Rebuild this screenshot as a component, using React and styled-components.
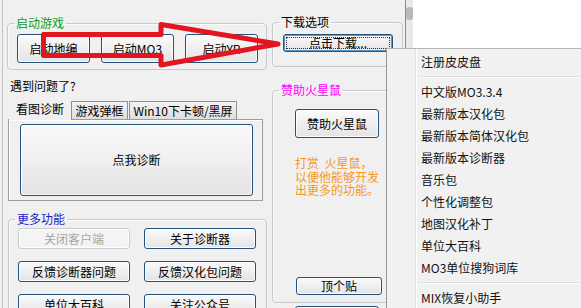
import React from "react";
import styled, { createGlobalStyle } from "styled-components";

const Global = createGlobalStyle`
  html, body { margin: 0; padding: 0; background: #f0f0f0; overflow: hidden; }
  #root { width: 581px; height: 308px; }
`;

const FONT = `"Noto Sans CJK SC", "Noto Sans", sans-serif`;

const Screen = styled.div`
  position: relative;
  width: 581px;
  height: 308px;
  overflow: hidden;
  display: flex;
  align-items: flex-start;
  background: #f0f0f0;
  font-family: ${FONT};
  font-size: 12px;
  color: #000;
`;

const WinEdge = styled.div`
  width: 1px;
  align-self: stretch;
  margin-left: 2px;
  background: #c4c4c4;
  flex: none;
`;

const LeftCol = styled.div`
  width: 260px;
  margin-left: 4px;
  padding-top: 16px;
  display: flex;
  flex-direction: column;
  flex: none;
`;

const RightCol = styled.div`
  width: 131px;
  margin-left: 5px;
  padding-top: 15px;
  display: flex;
  flex-direction: column;
  flex: none;
`;

const FarRight = styled.div`
  flex: 1;
  display: flex;
  padding-left: 2px;
  height: 48px;
`;

const ScrollStrip = styled.div`
  width: 8px;
  height: 48px;
  background: #e9e9ec;
  flex: none;
  border-left: 1px solid #8a88a6;
  box-sizing: border-box;
`;

const Thumb = styled.div`
  margin-top: 7px;
  height: 13px;
  border-radius: 3px;
  background: #b9b9bd;
`;

const WhitePane = styled.div`
  flex: 1;
  height: 48px;
  background: #fff;
`;

const Group = styled.fieldset`
  box-sizing: border-box;
  width: ${(p) => p.$w}px;
  margin: 0;
  margin-left: ${(p) => p.$ml || 0}px;
  margin-top: ${(p) => p.$mt || 0}px;
  padding: ${(p) => p.$pt}px 8px ${(p) => p.$pb}px 9px;
  border: 1px solid #c6cacd;
  border-radius: 4px;
  min-width: 0;
  box-shadow: inset 1px 1px 0 #fbfbfb;
`;

const Legend = styled.legend`
  padding: 0 2px;
  margin-left: -3px;
  font-size: 12px;
  line-height: 14px;
  color: ${(p) => p.$color};
`;

const Row = styled.div`
  display: flex;
  gap: 11px;
`;

const Btn = styled.button`
  box-sizing: border-box;
  position: relative;
  flex: none;
  width: ${(p) => p.$w}px;
  height: ${(p) => p.$h}px;
  margin: 0;
  margin-left: ${(p) => p.$ml || 0}px;
  margin-top: ${(p) => p.$mt || 0}px;
  padding: 0;
  font-family: ${FONT};
  font-size: 12px;
  line-height: 1;
  white-space: nowrap;
  color: ${(p) => (p.disabled ? "#a6a6a6" : "#000")};
  border: 1px solid ${(p) => (p.disabled ? "#c9cccd" : "#24527d")};
  border-radius: 3px;
  background: ${(p) =>
    p.disabled ? "#f4f4f4" : "linear-gradient(#fafafa, #efefef 50%, #e4e4e4)"};
  box-shadow: inset 0 0 0 1px ${(p) => (p.$focus ? "#5a9bd0" : "rgba(255,255,255,0.85)")};
  &::after {
    content: "";
    display: ${(p) => (p.$focus ? "block" : "none")};
    position: absolute;
    inset: 2px;
    border: 1px dotted #333;
  }
`;

const Question = styled.div`
  margin-top: 9px;
  padding-left: 3px;
  line-height: 14px;
  font-size: 12px;
`;

const TabStrip = styled.div`
  margin-top: 5px;
  margin-left: 1px;
  padding-left: 1px;
  height: 21px;
  display: flex;
  align-items: flex-end;
  position: relative;
  z-index: 1;
`;

const Tab = styled.div`
  box-sizing: border-box;
  width: ${(p) => p.$w}px;
  height: ${(p) => (p.$active ? 22 : 18)}px;
  margin-bottom: ${(p) => (p.$active ? -1 : 0)}px;
  margin-left: ${(p) => p.$ml || 0}px;
  display: flex;
  align-items: center;
  justify-content: center;
  white-space: nowrap;
  font-size: 12px;
  border: 1px solid ${(p) => (p.$active ? "#f0f0f0" : "#8f9090")};
  border-bottom: none;
  background: ${(p) => (p.$active ? "#f0f0f0" : "linear-gradient(#f3f3f3, #dedede)")};
  padding-bottom: ${(p) => (p.$active ? 3 : 0)}px;
`;

const TabPanel = styled.div`
  box-sizing: border-box;
  width: 255px;
  height: 82px;
  margin-left: 1px;
  padding: 4px 0 0 11px;
  border: 1px solid #9b9d9f;
  box-shadow: inset 1px 1px 0 #fff;
  background: #f0f0f0;
`;

const BtnGrid = styled.div`
  display: grid;
  grid-template-columns: 112px 112px;
  column-gap: 14px;
  row-gap: 12px;
`;

const Note = styled.div`
  margin-top: 18px;
  margin-left: 13px;
  color: #f59a1d;
  font-size: 12px;
  line-height: 13.5px;
  white-space: pre;
`;

const Stack = styled.div`
  display: flex;
  flex-direction: column;
  align-items: flex-start;
`;

const Menu = styled.div`
  position: absolute;
  left: 386px;
  top: 48px;
  width: 200px;
  height: 270px;
  box-sizing: border-box;
  padding-top: 2px;
  border-left: 1px solid #979797;
  border-top: 1px solid #b4b4b4;
  background: linear-gradient(
    to right,
    #f1f1f1 0,
    #f1f1f1 28px,
    #e2e3e3 28px,
    #e2e3e3 29px,
    #ffffff 29px,
    #ffffff 30px,
    #f1f1f1 30px
  );
  z-index: 5;
`;

const MenuItem = styled.div`
  height: 22px;
  line-height: 22px;
  padding-left: 34px;
  font-size: 12px;
  color: #111;
  white-space: nowrap;
`;

const MenuSep = styled.div`
  height: 8px;
  margin-left: 31px;
  position: relative;
  &::before {
    content: "";
    position: absolute;
    left: 0;
    right: 0;
    top: 3px;
    height: 1px;
    background: #e0e0e0;
    border-bottom: 1px solid #fff;
  }
`;

const ArrowLayer = styled.svg`
  position: absolute;
  left: 0;
  top: 0;
  pointer-events: none;
  z-index: 4;
`;

const menuItems = [
  "注册皮皮盘",
  "-",
  "中文版MO3.3.4",
  "最新版本汉化包",
  "最新版本简体汉化包",
  "最新版本诊断器",
  "音乐包",
  "个性化调整包",
  "地图汉化补丁",
  "单位大百科",
  "MO3单位搜狗词库",
  "-",
  "MIX恢复小助手",
];

export default function App() {
  return (
    <>
      <Global />
      <Screen>
        <WinEdge />
        <LeftCol>
          <Group $w={260} $pt={4} $pb={6}>
            <Legend $color="#0f9c12">启动游戏</Legend>
            <Row>
              <Btn $w={73} $h={29}>启动地编</Btn>
              <Btn $w={73} $h={29}>启动MO3</Btn>
              <Btn $w={73} $h={29}>启动YR</Btn>
            </Row>
          </Group>

          <Question>遇到问题了?</Question>

          <TabStrip>
            <Tab $w={62} $active>看图诊断</Tab>
            <Tab $w={57}>游戏弹框</Tab>
            <Tab $w={108} $ml={1}>Win10下卡顿/黑屏</Tab>
          </TabStrip>
          <TabPanel>
            <Btn $w={233} $h={72}>点我诊断</Btn>
          </TabPanel>

          <Group $w={259} $ml={1} $mt={11} $pt={2} $pb={10}>
            <Legend $color="#1c1cc8">更多功能</Legend>
            <BtnGrid>
              <Btn $w={112} $h={21} disabled>关闭客户端</Btn>
              <Btn $w={112} $h={21}>关于诊断器</Btn>
              <Btn $w={112} $h={21}>反馈诊断器问题</Btn>
              <Btn $w={112} $h={21}>反馈汉化包问题</Btn>
              <Btn $w={112} $h={21}>单位大百科</Btn>
              <Btn $w={112} $h={21}>关注公众号</Btn>
            </BtnGrid>
          </Group>
        </LeftCol>

        <RightCol>
          <Group $w={131} $pt={5} $pb={14}>
            <Legend $color="#000">下载选项</Legend>
            <Btn $w={110} $h={18} $ml={1} $focus>点击下载...</Btn>
          </Group>

          <Group $w={131} $mt={16} $pt={12} $pb={7}>
            <Legend $color="#ff00ff">赞助火星鼠</Legend>
            <Stack>
              <Btn $w={84} $h={29} $ml={13}>赞助火星鼠</Btn>
              <Note>{"打赏  火星鼠，\n以便他能够开发\n出更多的功能。"}</Note>
              <Btn $w={86} $h={18} $ml={14} $mt={80}>顶个贴</Btn>
            </Stack>
          </Group>
          <Btn $w={84} $h={29} $ml={23} $mt={3} aria-label="more" />
        </RightCol>

        <FarRight>
          <ScrollStrip>
            <Thumb />
          </ScrollStrip>
          <WhitePane />
        </FarRight>

        <Menu>
          {menuItems.map((m, i) =>
            m === "-" ? <MenuSep key={i} /> : <MenuItem key={i}>{m}</MenuItem>
          )}
        </Menu>

        <ArrowLayer width="581" height="308" viewBox="0 0 581 308">
          <polygon
            points="43.5,34.5 161,34.5 161,24.5 278,44 161,65 161,55.5 43.5,55.5"
            fill="none"
            stroke="#e3151f"
            strokeWidth="5"
            strokeLinejoin="round"
          />
        </ArrowLayer>
      </Screen>
    </>
  );
}
